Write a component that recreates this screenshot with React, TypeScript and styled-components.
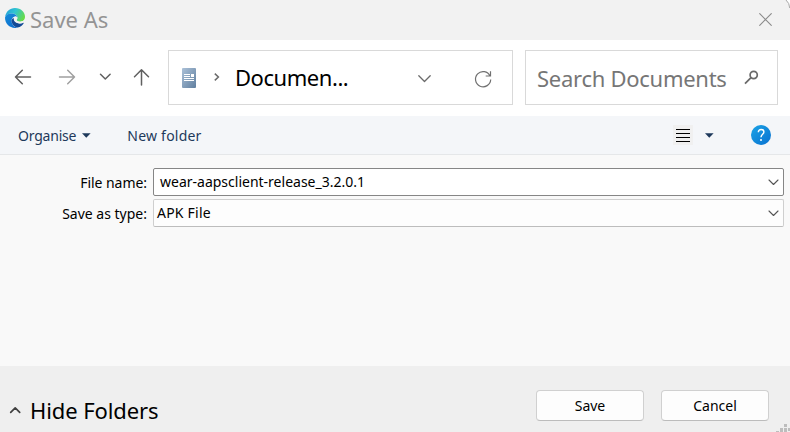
import React from 'react';
import styled, { createGlobalStyle } from 'styled-components';

const GlobalStyle = createGlobalStyle`
  * { box-sizing: border-box; }
  body { margin: 0; background: #fff; }
  svg { display: block; flex: none; overflow: visible; }
  button { font: inherit; color: inherit; padding: 0; border: 0; background: none; }
`;

const Dialog = styled.main`
  position: relative;
  display: flex;
  flex-direction: column;
  width: 790px;
  height: 432px;
  overflow: hidden;
  background: #f9f9f9;
  color: #000;
  font: 14px/20px 'Noto Sans', 'Open Sans', sans-serif;
`;

const Text = styled.span<{ $spacing?: number }>`
  white-space: pre;
  letter-spacing: ${(p) => p.$spacing ?? 0}px;
`;

const LargeText = styled(Text)`
  padding-bottom: 2px;
  font-size: 22px;
  line-height: 30px;
`;

const TitleBar = styled.header`
  display: flex;
  align-items: flex-start;
  height: 40px;
  padding: 4px 18px 0 5px;
  background: #f2f2f2;
  color: #949494;
  > svg { margin-top: 4px; }
  > ${LargeText} { margin-left: 5px; }
`;

const CloseButton = styled.button`
  margin: 9px 0.5px 0 auto;
`;

const Corner = styled.svg`
  position: absolute;
  top: 0;
  right: 0;
`;

const NavBar = styled.nav`
  display: flex;
  align-items: flex-start;
  height: 76px;
  padding: 10px 12px 0 14px;
  background: #fff;
`;

const NavButtons = styled.div`
  display: grid;
  grid-template-columns: 44px 41px 34px 35px;
  align-items: center;
  height: 54px;
`;

const Box = styled.div`
  display: flex;
  align-items: center;
  height: 55px;
  border: 1px solid #d9d9d9;
  background: #fff;
`;

const PathBox = styled(Box)`
  width: 345px;
  padding-left: 13px;
  > ${LargeText} { margin-left: 15px; width: 183px; }
`;

const SearchBox = styled(Box)`
  width: 253px;
  margin-left: 12px;
  padding: 2px 18px 0 11px;
  justify-content: space-between;
  color: #767676;
  > svg { margin-bottom: 2px; }
`;

const Toolbar = styled.div`
  display: flex;
  align-items: center;
  height: 39px;
  padding: 0 19px 0 18px;
  border-bottom: 1px solid #e5e7e9;
  background: #f4f6f9;
  color: #1e395b;
`;

const ToolButton = styled.button`
  display: flex;
  align-items: center;
  gap: 6px;
  margin-right: 36px;
  > ${Text} { padding-top: 2px; }
`;

const ViewTools = styled.div`
  display: flex;
  align-items: center;
  margin-left: auto;
`;

const ViewButton = styled.button`
  display: flex;
  align-items: center;
  gap: 12px;
  margin-right: 37px;
`;

const Form = styled.form`
  display: grid;
  grid-template-columns: 147px 631px;
  grid-auto-rows: 28px;
  gap: 3px 6px;
  align-content: start;
  height: 211px;
  padding-top: 13px;
`;

const Label = styled.label`
  line-height: 29px;
  text-align: right;
`;

const Field = styled.div<{ $active?: boolean }>`
  display: flex;
  align-items: center;
  justify-content: space-between;
  padding: 0 4px 0 ${(p) => (p.$active ? 6 : 3)}px;
  border: 1px solid ${(p) => (p.$active ? '#868686' : '#cfcfcf')};
  border-bottom-color: ${(p) => (p.$active ? '#868686' : '#bdbdbd')};
  border-radius: 2px;
  background: ${(p) => (p.$active ? '#fff' : '#fdfdfd')};
`;

const Footer = styled.footer`
  display: flex;
  align-items: flex-start;
  height: 66px;
  padding: 24px 21px 0 9px;
  background: #efefef;
`;

const HideFolders = styled.button`
  display: flex;
  align-items: center;
  gap: 9px;
  margin: 5px auto 0 0;
  > svg { margin-bottom: 2px; }
`;

const ActionButton = styled.button`
  width: 108px;
  height: 31px;
  margin-left: 17px;
  border: 1px solid #d0d0d0;
  border-bottom-color: #bcbcbc;
  border-radius: 4px;
  background: #fdfdfd;
`;

const Grip = styled.svg`
  position: absolute;
  right: 0;
  bottom: 0;
`;

type GlyphProps = { w: number; h: number; d: string; color?: string; stroke?: number };

const Glyph = ({ w, h, d, color = '#606060', stroke = 1.5 }: GlyphProps) => (
  <svg width={w} height={h} viewBox={`0 0 ${w} ${h}`} fill="none" stroke={color} strokeWidth={stroke} strokeLinecap="round" strokeLinejoin="round">
    <path d={d} />
  </svg>
);

const Caret = () => (
  <svg width="9" height="5" viewBox="0 0 9 5"><path d="M0 0.3H8.6L4.3 4.8Z" fill="#1e395b" /></svg>
);

const EdgeLogo = () => (
  <svg width="20" height="20" viewBox="0 0 20 20">
    <defs>
      <linearGradient id="edgeTop" x1="0" y1="0.2" x2="1" y2="0.6">
        <stop offset="0" stopColor="#249fd8" />
        <stop offset="0.45" stopColor="#30c5d2" />
        <stop offset="1" stopColor="#68dc45" />
      </linearGradient>
      <linearGradient id="edgeSide" x1="0" y1="0" x2="0.6" y2="1">
        <stop offset="0" stopColor="#168bd8" />
        <stop offset="1" stopColor="#0c70d0" />
      </linearGradient>
    </defs>
    <path d="M0.2 9C0.7 3.8 4.8 0 10 0C16 0 20 4.2 20 8.8C20 12 17.6 13.7 15.1 13.7C12.8 13.7 11.5 12.9 11.5 12.1C11.5 11.5 12.4 11.2 12.4 9.8C12.4 7.5 10 5.6 6.8 5.6C3.6 5.6 1.2 7 0.2 9Z" fill="url(#edgeTop)" />
    <path d="M0 9.6C0.7 7 3.3 5.5 6.4 5.5C9.8 5.5 12.3 7.2 12.4 9.7C11.9 8.7 10.8 8.3 9.8 8.5C7.4 9 6.3 11.2 6.6 13.4C7 16.8 9.5 19.3 13 19.5C12 19.9 11 20 10 20C4.4 20 0 15.6 0 9.6Z" fill="url(#edgeSide)" />
    <path d="M8.8 10C6.9 10.6 6.2 12 6.6 14C7.3 17 9.6 19.3 12.8 19.5C15.4 18.9 17.5 17.3 18.7 15.2C19 14.7 18.6 14.4 18.2 14.6C17 15.2 15.9 15.4 14.7 15.4C11.4 15.4 8.8 13.3 8.8 10Z" fill="#124a96" />
    <path d="M8.8 10.4C9 9 10 8.4 11 8.5C11.9 8.6 12.4 9.2 12.4 10C12.3 11.2 11.5 11.5 11.5 12.1C11.5 12.9 12.8 13.7 15.1 13.7C17 13.7 18.4 13 19.2 12.1L18.9 14.5C17.6 15.2 16.2 15.5 14.7 15.4C11.2 15.2 8.6 13.1 8.8 10.4Z" fill="#f2f2f2" />
  </svg>
);

const DocumentIcon = () => (
  <svg width="14" height="20" viewBox="0 0 14 20">
    <defs>
      <linearGradient id="page" x1="0" y1="0" x2="1" y2="1">
        <stop offset="0" stopColor="#abc1d8" />
        <stop offset="1" stopColor="#607f9f" />
      </linearGradient>
    </defs>
    <rect width="14" height="20" rx="1" fill="url(#page)" />
    <path d="M2 6.5H8M2 8.5H8M2 10.5H12M2 12.5H12" stroke="#fff" />
    <rect x="9" y="6" width="3" height="3" fill="#fff" />
  </svg>
);

const HelpIcon = () => (
  <svg width="20" height="20" viewBox="0 0 20 20">
    <defs>
      <linearGradient id="help" x1="0" y1="0" x2="1" y2="1">
        <stop offset="0" stopColor="#1ca4e6" />
        <stop offset="1" stopColor="#0870d0" />
      </linearGradient>
    </defs>
    <circle cx="10" cy="10" r="10" fill="url(#help)" />
    <path d="M7.3 7.2C7.3 5.4 8.5 4.5 10.1 4.5C11.8 4.5 12.9 5.5 12.9 7C12.9 9.3 10 9.4 10 12.2" fill="none" stroke="#fff" strokeWidth="1.4" />
    <circle cx="10" cy="15" r="1" fill="#fff" />
  </svg>
);

export default function App() {
  return (
    <Dialog>
      <GlobalStyle />
      <TitleBar>
        <EdgeLogo />
        <LargeText>Save As</LargeText>
        <CloseButton aria-label="Close">
          <Glyph w={13} h={13} d="M0.7 0.7L12.3 12.3M12.3 0.7L0.7 12.3" color="#8a8a8a" stroke={1.1} />
        </CloseButton>
      </TitleBar>
      <NavBar>
        <NavButtons>
          <Glyph w={18} h={16} d="M16.5 8H1.5M8.3 1.2L1.5 8L8.3 14.8" />
          <Glyph w={18} h={16} d="M1.5 8H16.5M9.7 1.2L16.5 8L9.7 14.8" color="#a0a0a0" />
          <Glyph w={13} h={8} d="M1.5 1.2L6.3 6L11.1 1.2" />
          <Glyph w={17} h={18} d="M8.5 17V1.8M1.5 8.8L8.5 1.8L15.5 8.8" />
        </NavButtons>
        <PathBox>
          <DocumentIcon />
          <svg width="24" height="12" viewBox="0 0 24 12"><path d="M18.8 1.6L22.4 5L18.8 8.4" fill="none" stroke="#6a6a6a" strokeWidth="1.5" /></svg>
          <LargeText $spacing={-0.45}>Documen...</LargeText>
          <Glyph w={13} h={6} d="M0.8 0.8L6.5 6.5L12.2 0.8" color="#6a6a6a" stroke={1.3} />
          <svg width="62" height="18" viewBox="-1.5 -1 62 18" fill="none" stroke="#707070" strokeWidth="1.2">
            <path d="M57.5 6A7.6 7.6 0 1 0 58.2 9.5M58 1.2V6H53.2" />
          </svg>
        </PathBox>
        <SearchBox>
          <LargeText $spacing={-0.27}>Search Documents</LargeText>
          <svg width="15" height="15" viewBox="0 0 15 15" fill="none" stroke="#6a6a6a" strokeWidth="1.7"><circle cx="9.7" cy="5" r="3.6" /><path d="M7 7.7L1 13.7" /></svg>
        </SearchBox>
      </NavBar>
      <Toolbar>
        <ToolButton><Text $spacing={-0.2}>Organise</Text><Caret /></ToolButton>
        <ToolButton><Text $spacing={0.22}>New folder</Text></ToolButton>
        <ViewTools>
          <ViewButton aria-label="Change view">
            <svg width="20" height="20" viewBox="0 0 20 20"><rect width="20" height="20" fill="#f0f0f0" /><path d="M3 4.5H17M3 8.5H17M3 12.5H17M3 16.5H17" stroke="#000" /></svg>
            <Caret />
          </ViewButton>
          <HelpIcon />
        </ViewTools>
      </Toolbar>
      <Form>
        <Label><Text $spacing={-0.05}>File name:</Text></Label>
        <Field $active>
          <Text>wear-aapsclient-release_3.2.0.1</Text>
          <Glyph w={11} h={7} d="M1 1L5.5 5.5L10 1" color="#555" stroke={1.1} />
        </Field>
        <Label><Text>Save as type:</Text></Label>
        <Field>
          <Text $spacing={0.22}>APK File</Text>
          <Glyph w={11} h={7} d="M1 1L5.5 5.5L10 1" color="#555" stroke={1.1} />
        </Field>
      </Form>
      <Footer>
        <HideFolders>
          <Glyph w={12} h={8} d="M1.7 6.3L6.2 1.8L10.7 6.3" color="#404040" stroke={1.7} />
          <LargeText $spacing={-0.1}>Hide Folders</LargeText>
        </HideFolders>
        <ActionButton><Text>Save</Text></ActionButton>
        <ActionButton><Text>Cancel</Text></ActionButton>
      </Footer>
      <Corner width="5" height="8" viewBox="0 0 5 8"><path d="M1 0H5V8Q5 3 1 0Z" fill="#fff" /><path d="M1 0Q4.5 3 4.7 8" fill="none" stroke="#aaa" /></Corner>
      <Grip width="14" height="8" viewBox="0 0 14 8" fill="#bdbdbd">
        <path d="M8 0h3v3H8zM4 4h3v3H4zM8 4h3v3H8zM12 4h2v3h-2zM0 7h3v1H0zM4 7h3v1H4zM8 7h3v1H8z" />
      </Grip>
    </Dialog>
  );
}
